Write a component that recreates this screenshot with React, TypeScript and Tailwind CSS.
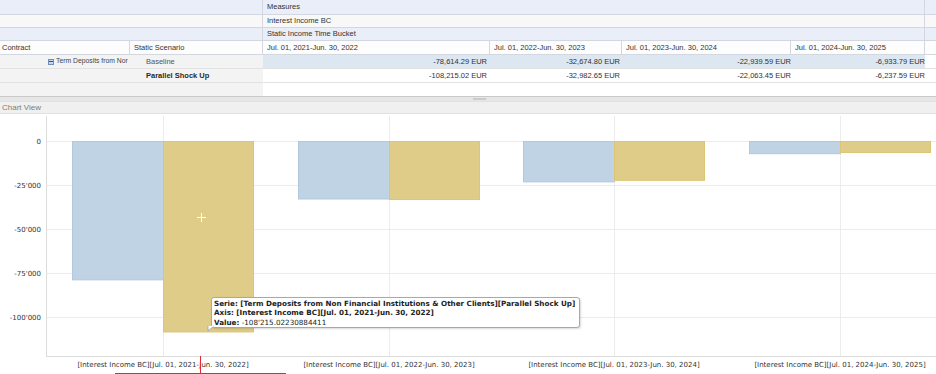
import React from "react";

const tableFont = "font-['Liberation_Sans',Arial,sans-serif]";
const chartFont = "'DejaVu Sans', Verdana, sans-serif";

type Cell = { value: string; w: string; pad: string };

const dateHeaders = [
  { label: "Jul. 01, 2021-Jun. 30, 2022", w: "w-[227px]" },
  { label: "Jul. 01, 2022-Jun. 30, 2023", w: "w-[132px]" },
  { label: "Jul. 01, 2023-Jun. 30, 2024", w: "w-[169px]" },
  { label: "Jul. 01, 2024-Jun. 30, 2025", w: "w-[134px]" },
];

const baseline: Cell[] = [
  { value: "-78,614.29 EUR", w: "w-[227px]", pad: "pr-[3px]" },
  { value: "-32,674.80 EUR", w: "w-[132px]", pad: "pr-[2px]" },
  { value: "-22,939.59 EUR", w: "w-[169px]", pad: "pr-0" },
  { value: "-6,933.79 EUR", w: "w-[134px]", pad: "pr-0" },
];

const shockUp: Cell[] = [
  { value: "-108,215.02 EUR", w: "w-[227px]", pad: "pr-[3px]" },
  { value: "-32,982.65 EUR", w: "w-[132px]", pad: "pr-[2px]" },
  { value: "-22,063.45 EUR", w: "w-[169px]", pad: "pr-0" },
  { value: "-6,237.59 EUR", w: "w-[134px]", pad: "pr-0" },
];

// chart data (y in chart-local pixels, 44px per 25'000)
const zeroY = 27;
const scale = 44 / 25000;
const groups = [
  { center: 163, blue: -78614.29, gold: -108215.02, label: "[Interest Income BC][Jul. 01, 2021-Jun. 30, 2022]" },
  { center: 389, blue: -32674.8, gold: -32982.65, label: "[Interest Income BC][Jul. 01, 2022-Jun. 30, 2023]" },
  { center: 614, blue: -22939.59, gold: -22063.45, label: "[Interest Income BC][Jul. 01, 2023-Jun. 30, 2024]" },
  { center: 840, blue: -6933.79, gold: -6237.59, label: "[Interest Income BC][Jul. 01, 2024-Jun. 30, 2025]" },
];
const ticks = [
  { y: 27, label: "0" },
  { y: 71, label: "-25'000" },
  { y: 115, label: "-50'000" },
  { y: 159, label: "-75'000" },
  { y: 203, label: "-100'000" },
];

function HeaderBand({ text, tall, tint }: { text: string; tall?: boolean; tint?: boolean }) {
  return (
    <div
      className={`flex border-b border-[#d3d8e0] ${tall ? "h-[15px]" : "h-[13px]"} ${
        tint ? "bg-[#e9eef8]" : "bg-[#f8f8f8]"
      }`}
    >
      <div className="w-[263px] border-r border-[#d3d8e0]" />
      <div className="w-[662px] border-r border-[#d3d8e0] pl-[4px] flex items-center">{text}</div>
      <div className="flex-1" />
    </div>
  );
}

function DataRow({ scenario, cells, bold, selected, contract }: {
  scenario: string;
  cells: Cell[];
  bold?: boolean;
  selected?: boolean;
  contract?: boolean;
}) {
  return (
    <div className="flex h-[14px] border-b border-[#e2e2e2]">
      <div className="w-[131px] bg-[#f3f3f3] flex items-center whitespace-nowrap">
        {contract && (
          <div className="flex items-center pl-[48px] gap-[2px] text-[#444]">
            <span className="w-[6px] h-[6px] border border-[#6f8fb5] bg-[#c5d7ec] flex items-center justify-center">
              <span className="w-[4px] h-px bg-[#34557f]" />
            </span>
            <span className="text-[6.8px]">Term Deposits from Nor</span>
          </div>
        )}
      </div>
      <div
        className={`w-[132px] bg-[#f3f3f3] pl-[15px] flex items-center ${
          bold ? "font-bold text-[#2a2a2a]" : "text-[#555]"
        }`}
      >
        {scenario}
      </div>
      {cells.map((c) => (
        <div
          key={c.value}
          className={`${c.w} ${c.pad} flex items-center justify-end ${selected ? "bg-[#dce7f1]" : "bg-white"}`}
        >
          {c.value}
        </div>
      ))}
      <div className="flex-1 bg-white" />
    </div>
  );
}

function Chart() {
  return (
    <svg width={936} height={260} className="block" style={{ fontFamily: chartFont }}>
      {/* grid */}
      {ticks.map((t) => (
        <line key={t.y} x1={46} x2={936} y1={t.y + 0.5} y2={t.y + 0.5} stroke="#ececec" />
      ))}
      {groups.map((g) => (
        <line key={g.center} x1={g.center + 0.5} x2={g.center + 0.5} y1={2} y2={242} stroke="#ececec" />
      ))}
      <line x1={46.5} x2={46.5} y1={2} y2={242} stroke="#dcdcdc" />
      <line x1={46} x2={936} y1={242.5} y2={242.5} stroke="#dcdcdc" />

      {/* bars */}
      {groups.map((g) => {
        const hb = -g.blue * scale;
        const hg = -g.gold * scale;
        return (
          <g key={g.label}>
            <rect x={g.center - 91 + 0.5} y={zeroY + 0.5} width={91} height={hb} fill="#bfd3e5" stroke="#b2c8dd" />
            <rect x={g.center + 0.5} y={zeroY + 0.5} width={90} height={hg} fill="#e0cc89" stroke="#dcc576" />
          </g>
        );
      })}

      {/* crosshair */}
      <line x1={197} x2={206} y1={103.5} y2={103.5} stroke="#ffffff" />
      <line x1={201.5} x2={201.5} y1={99} y2={108} stroke="#ffffff" />

      {/* axis labels */}
      {ticks.map((t) => (
        <text key={t.label} x={41} y={t.y + 3} textAnchor="end" fontSize={7} fill="#333">
          {t.label}
        </text>
      ))}
      {groups.map((g) => (
        <text key={g.label} x={g.center} y={252.5} textAnchor="middle" fontSize={7} fill="#333">
          {g.label}
        </text>
      ))}
    </svg>
  );
}

export default function App() {
  return (
    <div className={`w-[936px] h-[374px] overflow-hidden bg-white text-[7.5px] text-[#333] ${tableFont}`}>
      {/* pivot header */}
      <HeaderBand text="Measures" tall tint />
      <HeaderBand text="Interest Income BC" />
      <HeaderBand text="Static Income Time Bucket" tint />

      <div className="flex h-[14px] border-b border-[#d3d8e0] bg-[#fdfdfd]">
        <div className="w-[130px] border-r border-[#d3d8e0] pl-[2px] flex items-center">Contract</div>
        <div className="w-[133px] border-r border-[#d3d8e0] pl-[4px] flex items-center">Static Scenario</div>
        {dateHeaders.map((d) => (
          <div key={d.label} className={`${d.w} border-r border-[#d3d8e0] pl-[4px] flex items-center`}>
            {d.label}
          </div>
        ))}
        <div className="flex-1" />
      </div>

      {/* pivot body */}
      <DataRow scenario="Baseline" cells={baseline} selected contract />
      <DataRow scenario="Parallel Shock Up" cells={shockUp} bold />
      <div className="flex h-[14px] border-b border-[#c9c9c9]">
        <div className="w-[263px] bg-[#f3f3f3]" />
        <div className="flex-1 bg-white" />
      </div>

      {/* splitter */}
      <div className="h-[4px] bg-[#e6e6e6] flex items-center">
        <div className="ml-[473px] w-[13px] h-[2px] bg-[#cbcbcb]" />
      </div>

      {/* chart panel */}
      <div className="h-[13px] bg-[#f0f0f0] border-y border-[#e2e2e2] pl-[2px] flex items-center text-[8px] text-[#7d7d7d]">
        Chart View
      </div>

      <div className="relative h-[260px]">
        <Chart />

        {/* tooltip */}
        <div
          className="absolute left-[211px] top-[183px] w-[369px] h-[31px] bg-white border border-[#a8a8a8] rounded-[3px] shadow-[1px_1px_2px_rgba(0,0,0,0.15)] pl-[2px] pt-[1px] text-[7.2px] leading-[9.3px] text-[#222] whitespace-nowrap"
          style={{ fontFamily: chartFont }}
        >
          <div className="font-bold">
            Serie: [Term Deposits from Non Financial Institutions &amp; Other Clients][Parallel Shock Up]
          </div>
          <div className="font-bold">Axis: [Interest Income BC][Jul. 01, 2021-Jun. 30, 2022]</div>
          <div>
            <span className="font-bold">Value:</span> -108'215.02230884411
          </div>
        </div>
        <svg className="absolute left-[207px] top-[212px]" width={8} height={6}>
          <path d="M1 0 L7 0 L1 5 Z" fill="#ffffff" stroke="#a8a8a8" />
          <line x1={1.5} x2={6.5} y1={0.5} y2={0.5} stroke="#ffffff" />
        </svg>

        {/* red cursor marks */}
        <div className="absolute left-[200px] top-[242px] w-px h-[18px] bg-[#e8262c]" />
        <div className="absolute left-[115px] top-[259px] w-[171px] h-px bg-[#e8262c]" />
      </div>
    </div>
  );
}
